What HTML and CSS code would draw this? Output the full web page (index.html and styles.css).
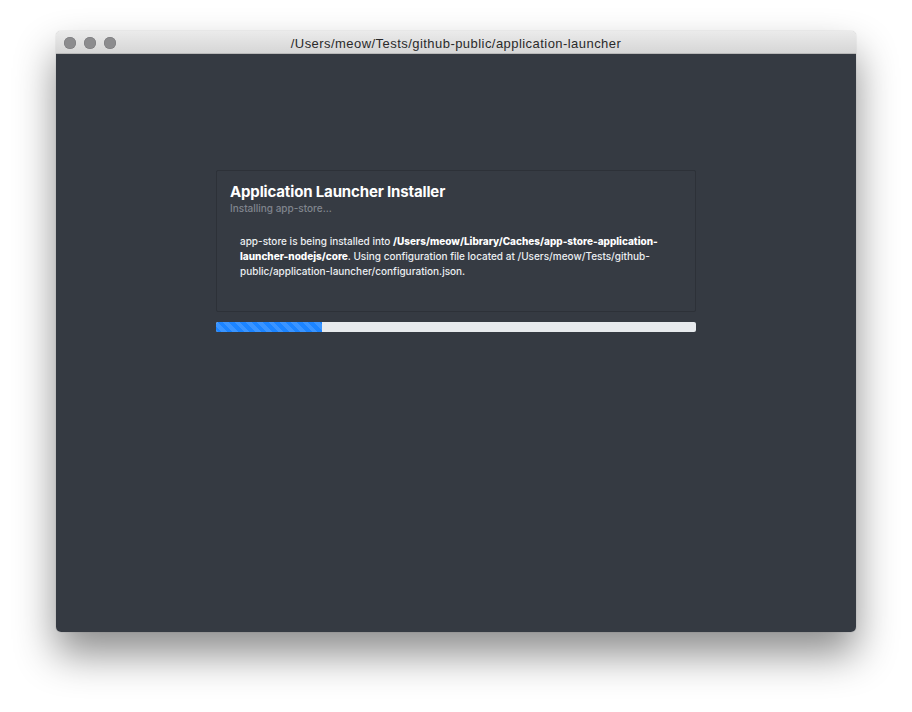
FILE: index.html
```html
<!DOCTYPE html>
<html>
<head>
<meta charset="utf-8">
<link rel="stylesheet" href="styles.css">
</head>
<body>
<div class="window">
  <div class="titlebar">
    <div class="lights"><span class="light"></span><span class="light"></span><span class="light"></span></div>
    <div class="title">/Users/meow/Tests/github-public/application-launcher</div>
  </div>
  <div class="content">
    <div class="panel">
      <div class="card">
        <h1 class="heading">Application Launcher Installer</h1>
        <div class="sub">Installing app-store...</div>
        <p class="msg">app-store is being installed into <b>/Users/meow/Library/Caches/app-store-application-launcher-nodejs/core</b>. Using configuration file located at /Users/meow/Tests/github-public/application-launcher/configuration.json.</p>
      </div>
      <div class="progress"><div class="bar" style="width:22%"></div></div>
    </div>
  </div>
</div>
</body>
</html>
```

FILE: styles.css
```css
html, body { margin: 0; padding: 0; background: #ffffff; }
body { width: 912px; height: 712px; overflow: hidden; padding: 31px 0 0 56px; box-sizing: border-box; }
.window {
  width: 800px; height: 601px; border-radius: 5px; overflow: hidden;
  display: flex; flex-direction: column;
  box-shadow: 0 22px 40px rgba(0,0,0,0.45), 0 0 1px rgba(0,0,0,0.4);
}
.titlebar {
  height: 23px; flex: none; position: relative;
  background: linear-gradient(#ebebeb, #d6d6d6);
  border-bottom: 1px solid #b8b8b8; box-sizing: border-box;
  display: flex; align-items: center; justify-content: center;
}
.lights { position: absolute; left: 8px; top: 6px; display: flex; gap: 8px; }
.light { width: 12px; height: 12px; border-radius: 50%; background: #8c8c8e; box-shadow: inset 0 0 0 0.5px #77777a; }
.title { font-family: "Liberation Sans", Arial, sans-serif; font-size: 13px; letter-spacing: 0.45px; color: #2a2a2a; padding-top: 2px; }
.content { flex: 1; background: #353a42; display: flex; justify-content: center; }
.panel { width: 480px; margin-top: 116px; }
.card {
  border: 1px solid #2d3138; border-radius: 2px; background: #363b43;
  padding: 11px 13px 32px 13px;
  font-family: Inter, "Noto Sans", sans-serif;
}
.heading { margin: 0; font-size: 15px; line-height: 19px; font-weight: 700; color: #ffffff; letter-spacing: -0.15px; }
.sub { font-size: 10px; line-height: 14px; color: #80858e; font-weight: 500; }
.msg { margin: 19px 0 0 10px; font-size: 10px; line-height: 15px; color: #eceff2; font-weight: 500; width: 430px; }
.msg b { font-weight: 800; color: #ffffff; }
.progress { margin-top: 10px; height: 10px; background: #e7eaed; border-radius: 2px; overflow: hidden; }
.bar {
  height: 100%;
  background: repeating-linear-gradient(45deg, #1c84ff 0 4px, #3a94ff 4px 8px);
}
```
